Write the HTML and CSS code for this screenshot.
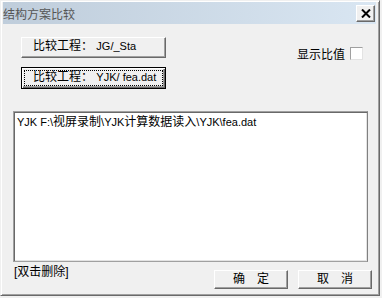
FILE: index.html
```html
<!DOCTYPE html>
<html>
<head>
    <meta charset="utf-8">
    <title>结构方案比较</title>
    <link rel="stylesheet" href="styles.css">
</head>
<body>
    <div class="dlg">
        <div class="titlebar">
            <span class="title">结构方案比较</span>
            <span class="close">
                <svg width="10" height="9" viewBox="0 0 10 9">
                    <path d="M1 0.5 L9 8.5 M9 0.5 L1 8.5" stroke="#000" stroke-width="2" fill="none"/>
                </svg>
            </span>
        </div>
        <div class="content">
            <div class="top">
                <div class="projects">
                    <div class="btn proj">比较工程： <span class="lat">JG/_Sta</span></div>
                    <div class="btn proj default">比较工程： <span class="lat">YJK/ fea.dat</span></div>
                </div>
                <div class="ratio">显示比值 <span class="check"></span></div>
            </div>
            <div class="list">
                <div class="item"><span class="lat">YJK F:\</span>视屏录制<span class="lat">\YJK</span>计算数据读入<span class="lat">\YJK\fea.dat</span></div>
            </div>
            <div class="footer">
                <span class="hint">[双击删除]</span>
                <div class="actions">
                    <div class="btn act">确　定</div>
                    <div class="btn act">取　消</div>
                </div>
            </div>
        </div>
    </div>
</body>
</html>
```

FILE: styles.css
```css
body {
    margin: 0;
    background: #f0f0f0;
    font-family: 'Liberation Sans', 'Noto Sans CJK SC', sans-serif;
    font-size: 12px;
    color: #000;
}

.lat {
    font-size: 11px;
}

.dlg {
    width: 380px;
    height: 296px;
    box-sizing: border-box;
    padding: 1px 3px 0 2px;
    background: #f0f0f0;
    border: 1px solid;
    border-color: #f0f0f0 #696969 #696969 #f0f0f0;
    box-shadow: inset 1px 1px #fff, inset -1px -1px #a0a0a0;
}

.titlebar {
    height: 22px;
    display: flex;
    align-items: center;
    justify-content: space-between;
    padding: 0 1px 0 0;
    background: linear-gradient(to right, #bfcddb, #d9e6f2);
}

.title {
    color: #555;
    font-size: 12px;
}

.close {
    width: 19px;
    height: 17px;
    box-sizing: border-box;
    display: flex;
    align-items: center;
    justify-content: center;
    background: #f0f0f0;
    border: 1px solid;
    border-color: #fff #696969 #696969 #fff;
    box-shadow: inset -1px -1px #a0a0a0;
}

.content {
    padding: 12px 4px 0 10px;
}

.top {
    display: flex;
    justify-content: space-between;
    align-items: flex-start;
    padding-left: 8px;
    padding-right: 8px;
}

.projects {
    display: flex;
    flex-direction: column;
    gap: 8px;
}

.btn {
    box-sizing: border-box;
    background: #f0f0f0;
    border: 1px solid;
    border-color: #fff #696969 #696969 #fff;
    box-shadow: inset -1px -1px #a0a0a0, inset 1px 1px #f0f0f0;
    line-height: 17px;
    white-space: nowrap;
}

.proj {
    position: relative;
    width: 145px;
    height: 21px;
    padding-left: 11px;
    margin-top: 1px;
}

.default {
    height: 22px;
    border-color: #000;
    box-shadow: inset 1px 1px #fff, inset -1px -1px #696969, inset -2px -2px #a0a0a0;
    line-height: 19px;
}

.default::after {
    content: "";
    position: absolute;
    left: 2px;
    top: 2px;
    right: 2px;
    bottom: 2px;
    border: 1px dotted #000;
}

.ratio {
    display: flex;
    align-items: center;
    gap: 5px;
    margin-top: 9px;
    margin-right: 1px;
}

.check {
    width: 13px;
    height: 13px;
    box-sizing: border-box;
    background: #fff;
    border: 1px solid;
    border-color: #a0a0a0 #e3e3e3 #e3e3e3 #a0a0a0;
}

.list {
    margin-top: 22px;
    width: 355px;
    height: 151px;
    box-sizing: border-box;
    background: #fff;
    border: 1px solid;
    border-color: #a0a0a0 #808080 #a0a0a0 #a0a0a0;
    box-shadow: inset 1px 1px #696969, inset -1px -1px #e3e3e3;
    padding: 3px 3px;
}

.item {
    line-height: 15px;
}

.footer {
    display: flex;
    justify-content: space-between;
    align-items: flex-start;
    margin-top: 3px;
}

.hint {
    padding-left: 1px;
    line-height: 14px;
}

.actions {
    display: flex;
    gap: 10px;
    margin-top: 5px;
}

.act {
    width: 74px;
    height: 19px;
    text-align: center;
    font-size: 12px;
}
```
